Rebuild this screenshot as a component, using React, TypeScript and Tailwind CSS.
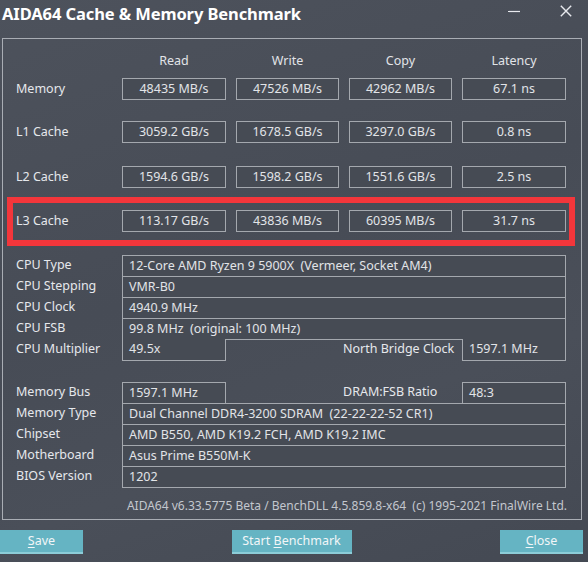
import React from "react"

const font = { fontFamily: '"Noto Sans", "Open Sans", sans-serif' }

const benchRows = [
  { label: "Memory", values: ["48435 MB/s", "47526 MB/s", "42962 MB/s", "67.1 ns"] },
  { label: "L1 Cache", values: ["3059.2 GB/s", "1678.5 GB/s", "3297.0 GB/s", "0.8 ns"] },
  { label: "L2 Cache", values: ["1594.6 GB/s", "1598.2 GB/s", "1551.6 GB/s", "2.5 ns"] },
]

const l3 = ["113.17 GB/s", "43836 MB/s", "60395 MB/s", "31.7 ns"]

const colWidths = ["w-[104px]", "w-[103px]", "w-[103px]", "w-[104px]"]

function ValueBoxes({ values }: { values: string[] }) {
  return (
    <div className="flex gap-[10px]">
      {values.map((v, i) => (
        <div
          key={i}
          className={`${colWidths[i]} h-[22px] border border-[#a4a8ae] bg-[#464b54] flex items-center justify-center text-[12.5px] text-[#e2e4e8]`}
        >
          {v}
        </div>
      ))}
    </div>
  )
}

function BenchRow({ label, values, className = "" }: { label: string; values: string[]; className?: string }) {
  return (
    <div className={`flex items-center ${className}`}>
      <div className="w-[106px] text-[12.5px] text-[#e6e8ec]">{label}</div>
      <ValueBoxes values={values} />
    </div>
  )
}

function InfoRow({ label, value, last = false }: { label: string; value: string; last?: boolean }) {
  return (
    <div className="flex h-[21px]">
      <div className="w-[106px] flex items-center text-[12.5px] text-[#e6e8ec]">{label}</div>
      <div
        className={`w-[444px] border-x border-t ${last ? "border-b h-[22px]" : ""} border-[#a4a8ae] bg-[#464b54] flex items-center pl-[6px] text-[12.5px] text-[#e2e4e8] whitespace-pre`}
      >
        {value}
      </div>
    </div>
  )
}

function SplitRow({
  label,
  value,
  midLabel,
  midValue,
  top,
}: {
  label: string
  value: string
  midLabel: string
  midValue: string
  top: boolean
}) {
  const edge = top ? "border-x border-t" : "border-x border-b h-[22px]"
  return (
    <div className="flex h-[21px]">
      <div className="w-[106px] flex items-center text-[12.5px] text-[#e6e8ec]">{label}</div>
      <div className={`w-[104px] ${edge} border-[#a4a8ae] bg-[#464b54] flex items-center pl-[6px] text-[12.5px] text-[#e2e4e8]`}>
        {value}
      </div>
      <div className="w-[236px] flex items-center pl-[117px] text-[12.5px] text-[#e6e8ec]">{midLabel}</div>
      <div className={`w-[104px] ${edge} border-[#a4a8ae] bg-[#464b54] flex items-center pl-[6px] text-[12.5px] text-[#e2e4e8]`}>
        {midValue}
      </div>
    </div>
  )
}

function Btn({ children, width }: { children: React.ReactNode; width: string }) {
  return (
    <button
      className={`${width} h-[24px] bg-[#65b4c3] border-b-2 border-[#8ccdd8] flex items-center justify-center text-[12.5px] text-[#f2f6f8]`}
    >
      {children}
    </button>
  )
}

export default function App() {
  return (
    <div
      style={font}
      className="w-[588px] h-[562px] overflow-hidden bg-[linear-gradient(160deg,#4d525c_0%,#474c56_45%,#4a4f59_70%,#444953_100%)] select-none"
    >
      {/* title bar */}
      <div className="h-[38px] flex items-start justify-between pl-[2px] pr-[16px] pt-[2px]">
        <div className="text-[16.5px] font-bold text-white tracking-[-0.1px]">AIDA64 Cache &amp; Memory Benchmark</div>
        <div className="flex items-center gap-[40px] text-[#e8eaee] pt-[3px]">
          <svg width="12" height="12" viewBox="0 0 12 12">
            <path d="M0 6.5h12" stroke="currentColor" strokeWidth="1.2" />
          </svg>
          <svg width="12" height="12" viewBox="0 0 12 12">
            <path d="M0.8 0.8l10.4 10.4M11.2 0.8l-10.4 10.4" stroke="currentColor" strokeWidth="1.4" />
          </svg>
        </div>
      </div>

      {/* main panel */}
      <div className="ml-[2px] w-[580px] h-[482px] border border-[#a9adb4] pt-[11px] pl-[13px] flex flex-col">
        <div className="flex h-[22px] items-center">
          <div className="w-[106px]" />
          <div className="flex gap-[10px] text-[12.5px] text-[#e2e4e8]">
            {["Read", "Write", "Copy", "Latency"].map((h, i) => (
              <div key={h} className={`${colWidths[i]} text-center`}>
                {h}
              </div>
            ))}
          </div>
        </div>

        <BenchRow label={benchRows[0].label} values={benchRows[0].values} className="mt-[6px]" />
        <BenchRow label={benchRows[1].label} values={benchRows[1].values} className="mt-[21px]" />
        <BenchRow label={benchRows[2].label} values={benchRows[2].values} className="mt-[23px]" />

        <div className="mt-[9px] -ml-[9px] w-[568px] border-[6px] border-[#f3363b] pt-[7px] pb-[8px] pl-[3px]">
          <BenchRow label="L3 Cache" values={l3} />
        </div>

        <div className="mt-[9px]">
          <InfoRow label="CPU Type" value="12-Core AMD Ryzen 9 5900X  (Vermeer, Socket AM4)" />
          <InfoRow label="CPU Stepping" value="VMR-B0" />
          <InfoRow label="CPU Clock" value="4940.9 MHz" />
          <InfoRow label="CPU FSB" value="99.8 MHz  (original: 100 MHz)" />
          <div className="flex h-[21px]">
            <div className="w-[106px]" />
            <div className="w-[444px] border-t border-[#a4a8ae]" />
          </div>
        </div>
        <div className="-mt-[21px]">
          <SplitRow label="CPU Multiplier" value="49.5x" midLabel="North Bridge Clock" midValue="1597.1 MHz" top={false} />
        </div>

        <div className="mt-[22px]">
          <SplitRow label="Memory Bus" value="1597.1 MHz" midLabel="DRAM:FSB Ratio" midValue="48:3" top={true} />
          <InfoRow label="Memory Type" value="Dual Channel DDR4-3200 SDRAM  (22-22-22-52 CR1)" />
          <InfoRow label="Chipset" value="AMD B550, AMD K19.2 FCH, AMD K19.2 IMC" />
          <InfoRow label="Motherboard" value="Asus Prime B550M-K" />
          <InfoRow label="BIOS Version" value="1202" last />
        </div>

        <div className="mt-[10px] w-[551px] text-right text-[12px] leading-[18px] text-[#c3c7ce] whitespace-pre">
          AIDA64 v6.33.5775 Beta / BenchDLL 4.5.859.8-x64  (c) 1995-2021 FinalWire Ltd.
        </div>
      </div>

      {/* buttons */}
      <div className="mt-[10px] w-[583px] flex justify-between">
        <Btn width="w-[83px]">
          <span className="underline underline-offset-2">S</span>ave
        </Btn>
        <Btn width="w-[120px]">
          Start&nbsp;<span className="underline underline-offset-2">B</span>enchmark
        </Btn>
        <Btn width="w-[83px]">
          <span className="underline underline-offset-2">C</span>lose
        </Btn>
      </div>
    </div>
  )
}
